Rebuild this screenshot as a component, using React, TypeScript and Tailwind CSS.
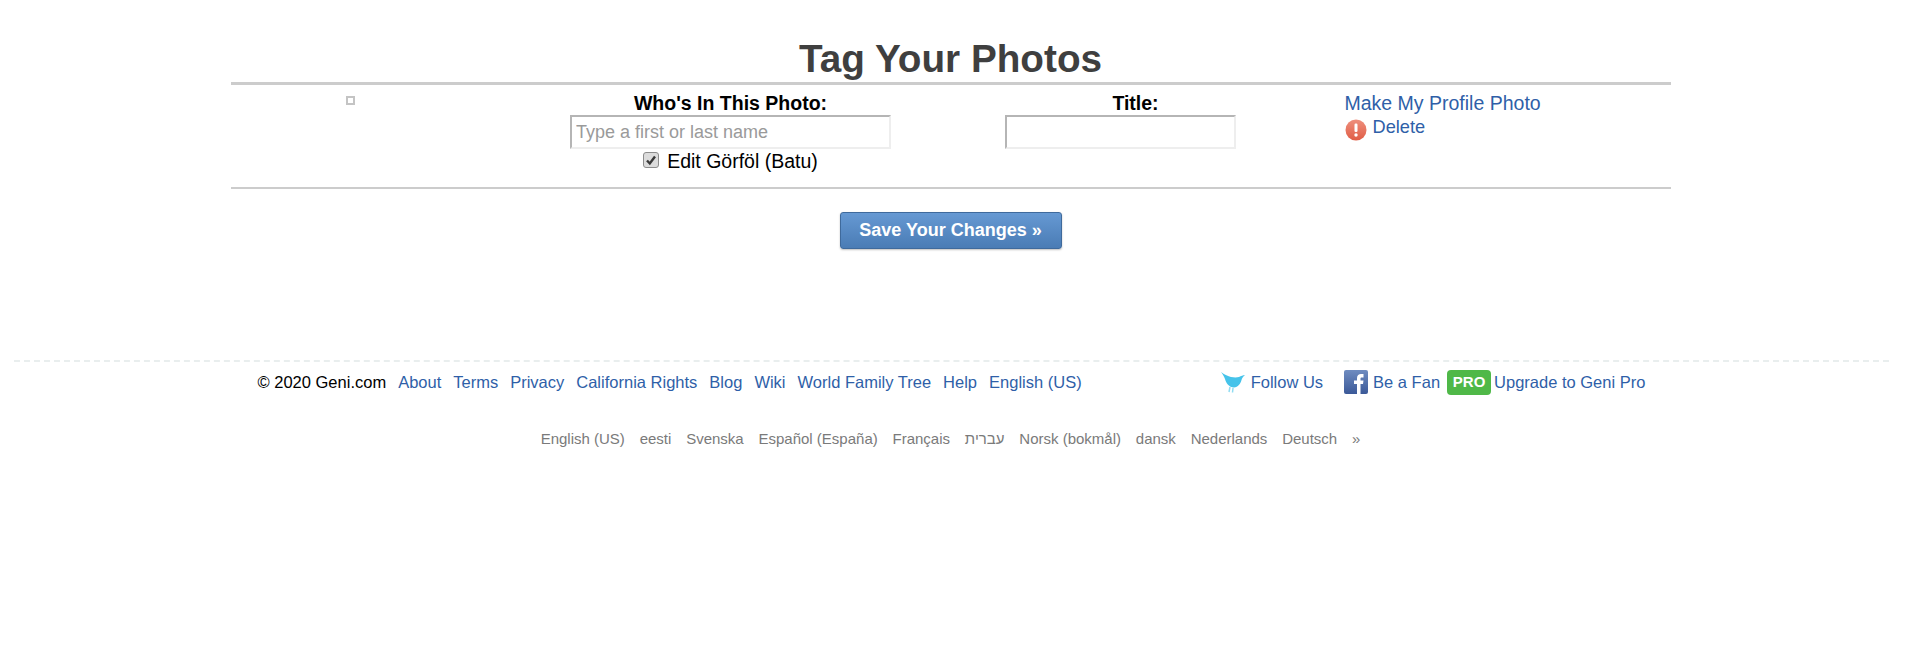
const F = "font-['Liberation_Sans',Arial,sans-serif]";

function Bird() {
  return (
    <svg width="26" height="24" viewBox="0 0 26 24" className="shrink-0">
      <path d="M1 2 C5 5 8 6 11 7 C14 7.500 17 7.500 19 7 C21 6 23 5 25 5 C23 7 22 8 21.500 10 C20.500 14 18 17 14 17.500 C9 17.500 6 13 5 9 C4 6 2.500 4 1 2Z" fill="#45c3ea" />
      <path d="M10 17 L9 22 M13 18 L12.500 22.500" stroke="#8fdcf2" strokeWidth="1.500" />
    </svg>
  );
}

function Fb() {
  return (
    <svg width="24" height="24" viewBox="0 0 24 24" className="shrink-0 block">
      <defs>
        <linearGradient id="fbg" x1="0" y1="0" x2="0" y2="1">
          <stop offset="0" stopColor="#6f8cc0" />
          <stop offset="1" stopColor="#3b5998" />
        </linearGradient>
      </defs>
      <rect width="24" height="24" rx="2" fill="url(#fbg)" />
      <path d="M13 24 V14 H10 V10.500 H13 V8 C13 5.200 14.800 4 17 4 H19.500 V7.500 H17.800 C16.700 7.500 16.500 8 16.500 8.900 V10.500 H19.500 L19 14 H16.500 V24Z" fill="#fff" />
    </svg>
  );
}

function Alert() {
  return (
    <svg width="22" height="22" viewBox="0 0 22 22" className="shrink-0 block">
      <defs>
        <linearGradient id="alg" x1="0" y1="0" x2="0" y2="1">
          <stop offset="0" stopColor="#ee8f7d" />
          <stop offset="1" stopColor="#e05d45" />
        </linearGradient>
      </defs>
      <circle cx="11" cy="11" r="10.500" fill="url(#alg)" />
      <rect x="9.500" y="4.500" width="3" height="8.500" rx="1.200" fill="#fff" />
      <circle cx="11" cy="16" r="1.700" fill="#fff" />
    </svg>
  );
}

const links = ["About", "Terms", "Privacy", "California Rights", "Blog", "Wiki", "World Family Tree", "Help", "English (US)"];
const langs = ["English (US)", "eesti", "Svenska", "Español (España)", "Français", "עברית", "Norsk (bokmål)", "dansk", "Nederlands", "Deutsch", "»"];

export default function App() {
  return (
    <div className={`${F} min-h-[657px] bg-white text-black pt-[35px]`}>
      <div className="mx-auto w-[1440px] translate-x-[-5px]">
        <h1 className="text-center text-[38.700px] leading-[47px] font-bold text-[#3f3f3f]">Tag Your Photos</h1>
        <div className="border-t-[3px] border-b-2 border-[#cccccc] h-[107px] grid grid-cols-[331px_338px_445px_1fr]">
          <div className="pt-[11px] pl-[115px]">
            <div className="w-[9px] h-[9px] border-2 border-[#c4c4c4]" />
          </div>
          <div className="flex flex-col items-center pt-[7px]">
            <div className="font-bold text-[19.500px] leading-[23px]">Who's In This Photo:</div>
            <input readOnly placeholder="Type a first or last name" className="w-[321px] h-[34px] border-2 border-t-[#b5b5b5] border-l-[#b5b5b5] border-r-[#eeeeee] border-b-[#eeeeee] px-[4px] text-[18px] placeholder:text-[#9a9a9a] outline-none" />
            <div className="flex items-center gap-[8px] text-[19.500px] leading-[23px] mt-[1px]">
              <span className="w-[16px] h-[16px] rounded-[3px] bg-[#dcdcdc] border border-[#8c8c8c] flex items-center justify-center mb-[4px]">
                <svg width="12" height="12" viewBox="0 0 12 12"><path d="M2 6.500 L4.800 9.500 L10 2.500" fill="none" stroke="#3a3a3a" strokeWidth="2.400" /></svg>
              </span>
              <span>Edit Görföl (Batu)</span>
            </div>
          </div>
          <div className="flex flex-col pt-[7px] pl-[105px]">
            <div className="w-[231px] text-center font-bold text-[19.500px] leading-[23px] pl-[31px]">Title:</div>
            <input readOnly className="w-[231px] h-[34px] border-2 border-t-[#b5b5b5] border-l-[#b5b5b5] border-r-[#eeeeee] border-b-[#eeeeee] outline-none" />
          </div>
          <div className="pt-[7px] text-[#2f5fa8] text-[19.500px] leading-[23px] whitespace-nowrap">
            <div>Make My Profile Photo</div>
            <div className="flex items-start gap-[6px] text-[18.200px] leading-[22px] mt-[1px]">
              <span className="mt-[3px]"><Alert /></span>
              <span>Delete</span>
            </div>
          </div>
        </div>
        <div className="flex justify-center mt-[23px]">
          <button className="w-[222px] h-[37px] rounded-[3px] border border-[#3f6a9c] bg-gradient-to-b from-[#6699d3] to-[#4a7cb5] text-white font-bold text-[18px] shadow-[0_1px_2px_rgba(0,0,0,0.25)]">Save Your Changes »</button>
        </div>
      </div>
      <div className="mt-[111px] ml-[14px] mr-[22px] border-t-2 border-dashed border-[#e9eeee]" />
      <div className="mx-auto w-[1440px] flex items-center h-[40px] text-[16.500px] pl-[27px] translate-x-[-5px]">
        <span className="mr-[12px]">© 2020 Geni.com</span>
        <div className="flex gap-[12px] text-[#2f5fa8]">
          {links.map((l) => <a key={l}>{l}</a>)}
        </div>
        <div className="flex items-center ml-[138px] text-[#2f5fa8]">
          <Bird />
          <span className="ml-[5px]">Follow Us</span>
          <span className="ml-[21px]"><Fb /></span>
          <span className="ml-[5px]">Be a Fan</span>
          <span className="ml-[7px] w-[44px] h-[25px] rounded-[4px] bg-[#4fb848] text-white font-bold text-[15px] flex items-center justify-center">PRO</span>
          <span className="ml-[3px]">Upgrade to Geni Pro</span>
        </div>
      </div>
      <div className="flex justify-center gap-[14.800px] mt-[27px] text-[15px] leading-[20px] text-[#7a7a7a] translate-x-[-5px]">
        {langs.map((l) => <a key={l}>{l}</a>)}
      </div>
    </div>
  );
}
